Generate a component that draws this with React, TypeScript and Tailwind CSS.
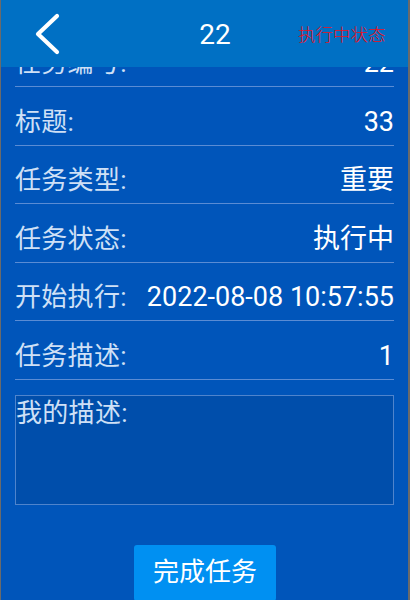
import React from "react";

const rows: { label: string; value: string }[] = [
  { label: "任务编号:", value: "22" },
  { label: "标题:", value: "33" },
  { label: "任务类型:", value: "重要" },
  { label: "任务状态:", value: "执行中" },
  { label: "开始执行:", value: "2022-08-08 10:57:55" },
  { label: "任务描述:", value: "1" },
];

const cjk = { fontFamily: 'Roboto, "Noto Sans CJK SC", sans-serif' };

export default function App() {
  return (
    <div className="w-[410px] h-[600px] bg-[#6a6a6a] flex pl-[1px] pr-[2px]" style={cjk}>
      <div className="flex-1 flex flex-col overflow-hidden bg-[#0055ba]">
        <div className="relative z-10 h-[67px] shrink-0 bg-[#0070c4] flex items-center">
          <div className="w-[140px] pl-[33px] flex items-center">
            <svg width="28" height="42" viewBox="0 0 28 42">
              <path d="M23 3 L4 21 L23 39" fill="none" stroke="#ffffff" strokeWidth="4.2" strokeLinecap="round" strokeLinejoin="round" />
            </svg>
          </div>
          <div className="w-[148px] text-center text-white text-[28px] leading-none pt-[2px]">22</div>
          <div className="flex-1 pl-[9px] text-[#e8101c] text-[17.5px] font-light leading-none pt-[1px]" style={{ fontFamily: '"Noto Sans CJK SC", sans-serif' }}>
            执行中状态
          </div>
        </div>
        <div className="flex-1 overflow-hidden">
          <div className="mt-[-38.6px] px-[14px]">
            {rows.map((r) => (
              <div key={r.label} className="h-[58.6px] border-b border-[#5a8cd4] flex items-end justify-between pb-[8px]">
                <span className="text-[26px] leading-[30px] tracking-[0.3px] text-[#cfe0f6]">{r.label}</span>
                <span className="text-[27px] leading-[30px] text-white">{r.value}</span>
              </div>
            ))}
            <div className="mt-[15px] h-[110px] border border-[#4f84cc] bg-[#004eab] pl-[0px] pt-[2px]">
              <span className="text-[26px] leading-[30px] tracking-[0.3px] text-[#cfe0f6]">我的描述:</span>
            </div>
            <div className="mt-[40px] flex justify-center">
              <div className="ml-[1px] w-[142px] h-[56px] rounded-[3px] bg-[#0090f2] flex items-center justify-center text-white text-[26px] leading-none pb-[2px]">
                完成任务
              </div>
            </div>
          </div>
        </div>
      </div>
    </div>
  );
}
